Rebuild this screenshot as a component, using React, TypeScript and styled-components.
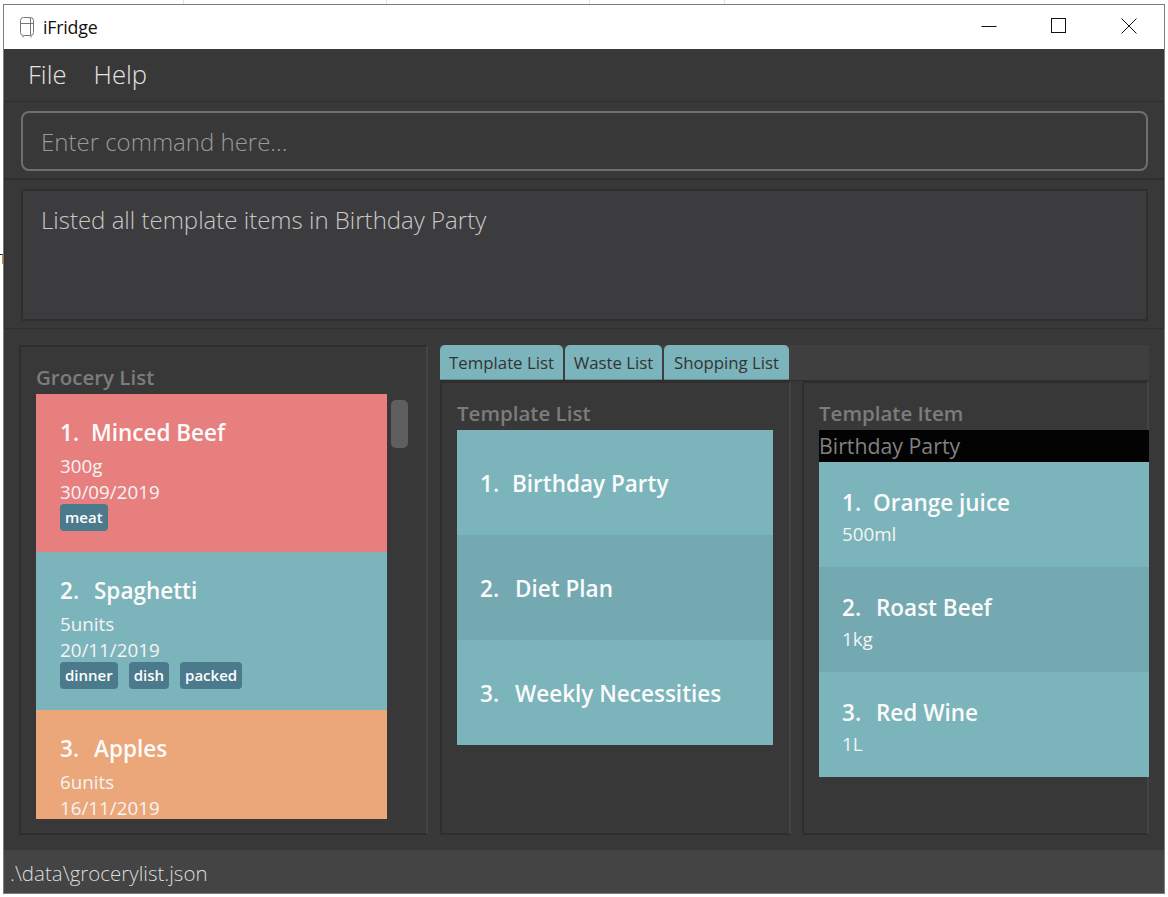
import React from 'react';
import styled, { createGlobalStyle } from 'styled-components';

const GlobalStyle = createGlobalStyle`
  html, body {
    margin: 0;
    padding: 0;
    background: #ffffff;
    font-family: "Open Sans", "Noto Sans", sans-serif;
  }
  * { box-sizing: border-box; }
`;

const Page = styled.div`
  position: relative;
  width: 1168px;
  height: 897px;
  padding: 0 3px 3px 3px;
  overflow: hidden;
`;

// what shows of the desktop behind the window
const BehindStrip = styled.div`
  height: 4px;
  display: flex;
`;

const BehindCell = styled.div<{ $width: number }>`
  width: ${(p) => p.$width}px;
  height: 4px;
  border-right: 1px solid #e2e2e2;
`;

const BehindMark = styled.div`
  position: absolute;
  left: 0;
  top: 254px;
  width: 3px;
  height: 10px;
  border-top: 1px solid #222;
  border-right: 1px solid #e08a1e;
`;

const Window = styled.div`
  width: 1162px;
  height: 890px;
  border: 1px solid #7d7d7d;
  display: flex;
  flex-direction: column;
  background: #383838;
`;

const TitleBar = styled.div`
  height: 44px;
  flex: none;
  background: #fff;
  display: flex;
  align-items: center;
  padding-left: 15px;
  color: #111;
  font-size: 17.8px;
`;

const AppName = styled.span`
  margin-left: 8px;
  flex: 1;
  letter-spacing: -0.2px;
`;

const WinButton = styled.div`
  width: 70px;
  height: 44px;
  padding-bottom: 3px;
  display: flex;
  align-items: center;
  justify-content: center;
`;

const MenuBar = styled.div`
  height: 53px;
  flex: none;
  display: flex;
  align-items: center;
  gap: 27px;
  padding: 0 0 2px 24px;
  color: #e4e4e4;
  font-size: 25.6px;
  font-weight: 300;
  border-bottom: 1px solid #2e2e2e;
`;

const CommandSection = styled.div`
  height: 78px;
  flex: none;
  padding: 9px 15px 7px 16px;
  border-bottom: 2px solid #2e2e2e;
  border-left: 1px solid #2e2e2e;
  border-right: 1px solid #2e2e2e;
`;

const CommandBox = styled.div`
  height: 60px;
  border: 2px solid #6f6f6f;
  border-radius: 8px;
  display: flex;
  align-items: center;
  padding-left: 18px;
  color: #9a9a9a;
  font-size: 24px;
  font-weight: 300;
`;

const ResultSection = styled.div`
  height: 149px;
  flex: none;
  padding: 9px 15px 8px 16px;
  border-bottom: 1px solid #2e2e2e;
  border-left: 1px solid #2e2e2e;
  border-right: 1px solid #2e2e2e;
`;

const ResultBox = styled.div`
  height: 132px;
  background: #3c3c3e;
  border: 2px solid #2e2e2e;
  padding: 13px 18px;
  color: #c8c8c8;
  font-size: 24px;
  font-weight: 300;
  line-height: 32px;
`;

const Main = styled.div`
  flex: 1;
  min-height: 0;
  display: flex;
  padding: 16px 15px 15px 15px;
`;

const Panel = styled.div<{ $width: number }>`
  width: ${(p) => p.$width}px;
  flex: none;
  min-height: 0;
  border: 2px solid #2e2e2e;
  border-right-color: #444;
  padding: 15px 0 14px 15px;
  display: flex;
  flex-direction: column;
`;

const PanelTitle = styled.div`
  height: 32px;
  line-height: 30px;
  color: #7c7c7c;
  font-size: 20.5px;
  font-weight: 600;
  flex: none;
`;

const ListRow = styled.div`
  flex: 1;
  display: flex;
  min-height: 0;
`;

const GroceryScroll = styled.div`
  width: 351px;
  height: 100%;
  overflow: hidden;
`;

const Track = styled.div`
  margin: 6px 0 0 4px;
  width: 17px;
`;

const Thumb = styled.div`
  height: 48px;
  border-radius: 5px;
  background: #5f5f5f;
`;

const Card = styled.div<{ $bg: string; $height: number; $pad: number; $left: number }>`
  height: ${(p) => p.$height}px;
  background: ${(p) => p.$bg};
  padding: ${(p) => p.$pad}px 0 0 ${(p) => p.$left}px;
  color: #fff;
  overflow: hidden;
`;

const CardTitle = styled.div`
  display: flex;
  font-size: 22.5px;
  font-weight: 600;
  line-height: 34px;
  color: #fbfbfb;
`;

// the "1" of the reference font is narrower, so the first row starts closer
const Num = styled.span<{ $first: boolean; $base: number }>`
  width: ${(p) => (p.$first ? p.$base : p.$base + 3)}px;
  flex: none;
`;

const CardText = styled.div<{ $top?: number }>`
  margin-top: ${(p) => p.$top ?? 0}px;
  font-size: 18.8px;
  line-height: 26px;
  color: #f4f4f4;
  font-weight: 400;
`;

const Tags = styled.div`
  display: flex;
  gap: 11px;
  margin-top: -1px;
`;

const Tag = styled.span`
  height: 27px;
  line-height: 26px;
  padding: 0 5px;
  border-radius: 4px;
  background: #4a7a8c;
  color: #fff;
  font-size: 15px;
  font-weight: 600;
`;

const Tabbed = styled.div`
  width: 709px;
  flex: none;
  margin-left: 12px;
  min-height: 0;
  display: flex;
  flex-direction: column;
`;

const TabHeader = styled.div`
  height: 36px;
  flex: none;
  display: flex;
  gap: 2px;
  background: #3f3f3f;
  border-bottom: 1px solid #2e2e2e;
`;

const Tab = styled.div<{ $width: number }>`
  width: ${(p) => p.$width}px;
  height: 35px;
  background: #7cb4bc;
  border-radius: 5px 5px 0 0;
  border-bottom: 1px solid #5f8a90;
  color: #333;
  font-size: 16.8px;
  line-height: 36px;
  text-align: center;
`;

const TabBody = styled.div`
  flex: 1;
  min-height: 0;
  display: flex;
  gap: 11px;
`;

const TemplateList = styled.div`
  width: 316px;
`;

const ItemColumn = styled.div`
  width: 330px;
`;

const BlackBar = styled.div`
  height: 32px;
  line-height: 32px;
  background: #030303;
  color: #808080;
  font-size: 21.3px;
  font-weight: 500;
`;

const StatusBar = styled.div`
  height: 43px;
  flex: none;
  background: #444;
  color: #dcdcdc;
  font-size: 20.5px;
  font-weight: 300;
  padding-left: 6px;
  line-height: 47px;
`;

const TEAL = '#7cb4bc';
const TEAL_DARK = '#74a9b2';
const RED = '#e87f7f';
const ORANGE = '#eba67a';

const groceries = [
  { n: 1, name: 'Minced Beef', amount: '300g', date: '30/09/2019', tags: ['meat'], bg: RED },
  { n: 2, name: 'Spaghetti', amount: '5units', date: '20/11/2019', tags: ['dinner', 'dish', 'packed'], bg: TEAL },
  { n: 3, name: 'Apples', amount: '6units', date: '16/11/2019', tags: [], bg: ORANGE },
];

const templates = ['Birthday Party', 'Diet Plan', 'Weekly Necessities'];

const templateItems = [
  { name: 'Orange juice', amount: '500ml' },
  { name: 'Roast Beef', amount: '1kg' },
  { name: 'Red Wine', amount: '1L' },
];

const FridgeIcon = () => (
  <svg width="16" height="22" viewBox="0 0 16 22" fill="none" stroke="#777" strokeWidth="1">
    <rect x="1.5" y="1.5" width="13" height="18" rx="3" />
    <path d="M1.5 7.5h13M11.5 2v17M4 20v1.5M12 20v1.5" />
  </svg>
);

export default function App() {
  return (
    <Page>
      <GlobalStyle />
      <BehindStrip>
        <BehindCell $width={181} />
        <BehindCell $width={203} />
        <BehindCell $width={203} />
        <BehindCell $width={135} />
      </BehindStrip>
      <BehindMark />
      <Window>
        <TitleBar>
          <FridgeIcon />
          <AppName>iFridge</AppName>
          <WinButton>
            <svg width="16" height="16" viewBox="0 0 16 16" stroke="#111" fill="none">
              <path d="M0.5 8.5h15" />
            </svg>
          </WinButton>
          <WinButton>
            <svg width="16" height="16" viewBox="0 0 16 16" stroke="#111" fill="none">
              <rect x="0.5" y="0.5" width="14" height="14" />
            </svg>
          </WinButton>
          <WinButton>
            <svg width="16" height="16" viewBox="0 0 16 16" stroke="#111" fill="none">
              <path d="M0.5 0.5l15 15M15.5 0.5l-15 15" />
            </svg>
          </WinButton>
        </TitleBar>

        <MenuBar>
          <span>File</span>
          <span>Help</span>
        </MenuBar>

        <CommandSection>
          <CommandBox>Enter command here...</CommandBox>
        </CommandSection>

        <ResultSection>
          <ResultBox>Listed all template items in Birthday Party</ResultBox>
        </ResultSection>

        <Main>
          <Panel $width={409}>
            <PanelTitle>Grocery List</PanelTitle>
            <ListRow>
              <GroceryScroll>
                {groceries.map((g) => (
                  <Card key={g.n} $bg={g.bg} $height={158} $pad={22} $left={24}>
                    <CardTitle>
                      <Num $first={g.n === 1} $base={31}>{g.n}.</Num>
                      {g.name}
                    </CardTitle>
                    <CardText $top={3}>{g.amount}</CardText>
                    <CardText>{g.date}</CardText>
                    <Tags>
                      {g.tags.map((t) => (
                        <Tag key={t}>{t}</Tag>
                      ))}
                    </Tags>
                  </Card>
                ))}
              </GroceryScroll>
              <Track>
                <Thumb />
              </Track>
            </ListRow>
          </Panel>

          <Tabbed>
            <TabHeader>
              <Tab $width={123}>Template List</Tab>
              <Tab $width={97}>Waste List</Tab>
              <Tab $width={125}>Shopping List</Tab>
            </TabHeader>
            <TabBody>
              <Panel $width={351}>
                <PanelTitle>Template List</PanelTitle>
                <TemplateList>
                  {templates.map((t, i) => (
                    <Card key={t} $bg={i === 1 ? TEAL_DARK : TEAL} $height={105} $pad={37} $left={23}>
                      <CardTitle>
                        <Num $first={i === 0} $base={32}>{i + 1}.</Num>
                        {t}
                      </CardTitle>
                    </Card>
                  ))}
                </TemplateList>
              </Panel>
              <Panel $width={347}>
                <PanelTitle>Template Item</PanelTitle>
                <ItemColumn>
                  <BlackBar>Birthday Party</BlackBar>
                  {templateItems.map((t, i) => (
                    <Card key={t.name} $bg={i === 1 ? TEAL_DARK : TEAL} $height={105} $pad={24} $left={23}>
                      <CardTitle>
                        <Num $first={i === 0} $base={31}>{i + 1}.</Num>
                        {t.name}
                      </CardTitle>
                      <CardText $top={1}>{t.amount}</CardText>
                    </Card>
                  ))}
                </ItemColumn>
              </Panel>
            </TabBody>
          </Tabbed>
        </Main>

        <StatusBar>.\data\grocerylist.json</StatusBar>
      </Window>
    </Page>
  );
}
